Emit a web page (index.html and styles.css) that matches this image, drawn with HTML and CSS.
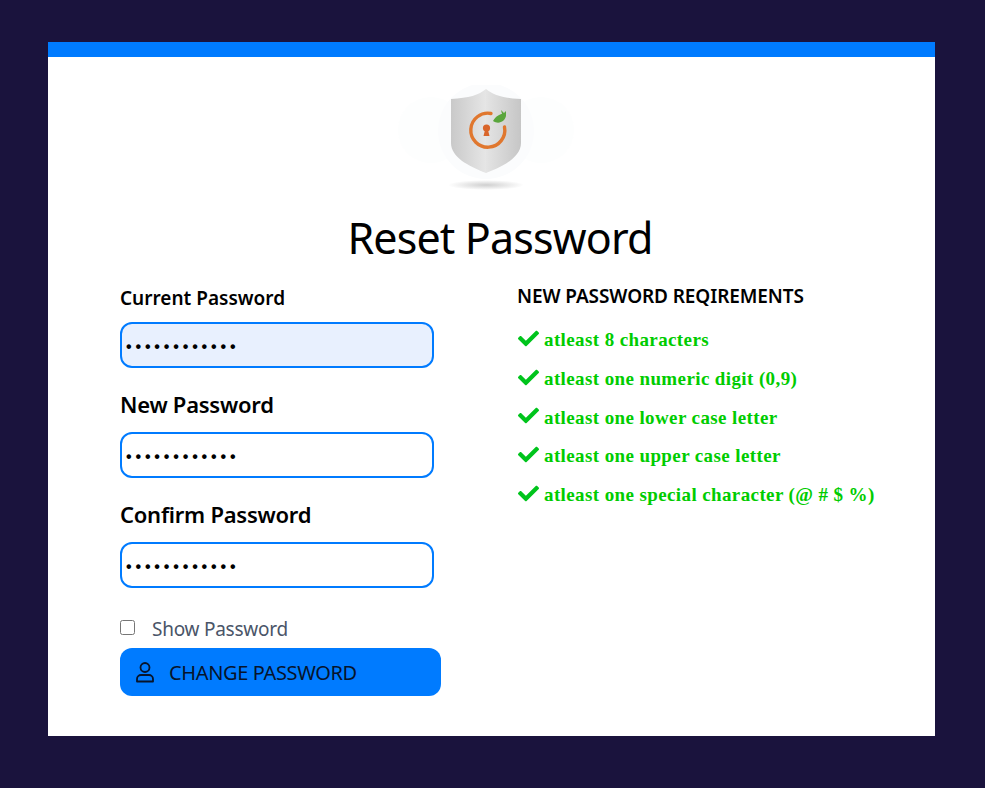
FILE: index.html
```html
<!DOCTYPE html>
<html lang="en">
<head>
<meta charset="utf-8">
<title>Reset Password</title>
<link rel="stylesheet" href="styles.css">
</head>
<body>
<main class="card">
  <div class="logo-wrap">
    <svg class="logo" width="180" height="110" viewBox="0 0 180 110">
      <defs>
        <linearGradient id="sl" x1="0" x2="1" y1="0" y2="0"><stop offset="0" stop-color="#c9c9c9"/><stop offset="1" stop-color="#e6e6e6"/></linearGradient>
        <linearGradient id="sr" x1="0" x2="1" y1="0" y2="0"><stop offset="0" stop-color="#e4e4e4"/><stop offset="1" stop-color="#c6c6c6"/></linearGradient>
        <radialGradient id="sh"><stop offset="0" stop-color="#cfcfcf"/><stop offset="1" stop-color="#ffffff"/></radialGradient>
        <filter id="bl"><feGaussianBlur stdDeviation="0.6"/></filter>
      </defs>
      <circle cx="35" cy="45" r="33" fill="#fdfefe"/>
      <circle cx="145" cy="45" r="33" fill="#fdfefe"/>
      <circle cx="90" cy="46" r="48" fill="#fbfcfd"/>
      <ellipse cx="90" cy="100" rx="38" ry="5" fill="url(#sh)"/>
      <g filter="url(#bl)">
        <path d="M90 4C83 10 73 13 55 14V58C55 72 72 81 90 88Z" fill="url(#sl)"/>
        <path d="M90 4C97 10 107 13 125 14V58C125 72 108 81 90 88Z" fill="url(#sr)"/>
        <path d="M95 28.500A17 17 0 1 0 108.500 42" fill="none" stroke="#e0772f" stroke-width="3.400" stroke-linecap="round"/>
        <circle cx="90.500" cy="43" r="3.600" fill="#d9652b"/>
        <path d="M89 45H92L93.500 51H87.500Z" fill="#d9652b"/>
        <path d="M97 36C100 31 104 29 106 29L105 25L108 28L110 26L110 31C109 36 103 40 97 36Z" fill="#5aa63c"/>
      </g>
    </svg>
  </div>
  <h1 class="title">Reset Password</h1>
  <div class="columns">
    <form class="form">
      <label class="label label-sm" for="cur">Current Password</label>
      <input class="field field-filled" id="cur" type="password" value="abcdefghijkl">
      <label class="label" for="new">New Password</label>
      <input class="field" id="new" type="password" value="abcdefghijkl">
      <label class="label" for="con">Confirm Password</label>
      <input class="field" id="con" type="password" value="abcdefghijkl">
      <div class="show">
        <input class="check" id="show" type="checkbox">
        <label class="show-label" for="show">Show Password</label>
      </div>
      <button class="submit" type="button">
        <svg class="user" width="20" height="22" viewBox="0 0 20 22" fill="none" stroke="#07142b" stroke-width="1.800">
          <circle cx="10" cy="6.500" r="4.500"/>
          <path d="M2 20.500V18C2 15.500 4 14 6 14H14C16 14 18 15.500 18 18V20.500Z" stroke-linejoin="round"/>
        </svg>
        CHANGE PASSWORD
      </button>
    </form>
    <section class="reqs">
      <h2 class="reqs-title">NEW PASSWORD REQIREMENTS</h2>
      <ul class="req-list">
        <li class="req"><svg class="tick" viewBox="0 0 512 512"><path d="M173.898 439.404l-166.4-166.4c-9.997-9.997-9.997-26.206 0-36.204l36.203-36.204c9.997-9.998 26.207-9.998 36.204 0L192 312.69 432.095 72.596c9.997-9.997 26.207-9.997 36.204 0l36.203 36.204c9.997 9.997 9.997 26.206 0 36.204l-294.4 294.401c-9.998 9.997-26.207 9.997-36.204-.001z"/></svg>atleast 8 characters</li>
        <li class="req"><svg class="tick" viewBox="0 0 512 512"><path d="M173.898 439.404l-166.4-166.4c-9.997-9.997-9.997-26.206 0-36.204l36.203-36.204c9.997-9.998 26.207-9.998 36.204 0L192 312.69 432.095 72.596c9.997-9.997 26.207-9.997 36.204 0l36.203 36.204c9.997 9.997 9.997 26.206 0 36.204l-294.4 294.401c-9.998 9.997-26.207 9.997-36.204-.001z"/></svg>atleast one numeric digit (0,9)</li>
        <li class="req"><svg class="tick" viewBox="0 0 512 512"><path d="M173.898 439.404l-166.4-166.4c-9.997-9.997-9.997-26.206 0-36.204l36.203-36.204c9.997-9.998 26.207-9.998 36.204 0L192 312.69 432.095 72.596c9.997-9.997 26.207-9.997 36.204 0l36.203 36.204c9.997 9.997 9.997 26.206 0 36.204l-294.4 294.401c-9.998 9.997-26.207 9.997-36.204-.001z"/></svg>atleast one lower case letter</li>
        <li class="req"><svg class="tick" viewBox="0 0 512 512"><path d="M173.898 439.404l-166.4-166.4c-9.997-9.997-9.997-26.206 0-36.204l36.203-36.204c9.997-9.998 26.207-9.998 36.204 0L192 312.69 432.095 72.596c9.997-9.997 26.207-9.997 36.204 0l36.203 36.204c9.997 9.997 9.997 26.206 0 36.204l-294.4 294.401c-9.998 9.997-26.207 9.997-36.204-.001z"/></svg>atleast one upper case letter</li>
        <li class="req"><svg class="tick" viewBox="0 0 512 512"><path d="M173.898 439.404l-166.4-166.4c-9.997-9.997-9.997-26.206 0-36.204l36.203-36.204c9.997-9.998 26.207-9.998 36.204 0L192 312.69 432.095 72.596c9.997-9.997 26.207-9.997 36.204 0l36.203 36.204c9.997 9.997 9.997 26.206 0 36.204l-294.4 294.401c-9.998 9.997-26.207 9.997-36.204-.001z"/></svg>atleast one special character (@ # $ %)</li>
      </ul>
    </section>
  </div>
</main>
</body>
</html>
```
FILE: styles.css
```css
* { box-sizing: border-box; }
html, body { margin: 0; height: 100%; overflow: hidden; }
body {
  background: #1a133d;
  padding: 42px 50px 52px 48px;
  font-family: "Noto Sans", "Open Sans", sans-serif;
  color: #000;
}
.card {
  background: #fff;
  border-top: 15px solid #007bff;
  height: 694px;
  padding: 28px 60px 0 72px;
}
.logo-wrap { display: flex; justify-content: center; padding-left: 8px; height: 110px; margin-left: -31px; }
.logo { display: block; }
.title {
  margin: 17px 0 0;
  text-align: center;
  font-size: 43px;
  line-height: 52px;
  font-weight: 400;
  letter-spacing: -0.85px;
  padding-left: 5px;
}
.columns { display: flex; margin-top: 21px; }
.form { width: 397px; flex: none; display: flex; flex-direction: column; align-items: flex-start; }
.label { font-weight: 600; font-size: 22px; line-height: 30px; margin-top: 21px; margin-bottom: 13px; letter-spacing: -0.25px; }
.label-sm { font-size: 19px; margin-top: 0; line-height: 26px; margin-bottom: 11px; letter-spacing: 0; }
.field {
  width: 314px;
  height: 46px;
  border: 2px solid #007bff;
  border-radius: 12px;
  background: #fff;
  padding: 3px 4px 0;
  font-family: "Liberation Sans", sans-serif;
  font-size: 16px;
  letter-spacing: 3.85px;
  font-weight: 700;
  color: #000;
  outline: none;
}
.field-filled { background: #e8f0fe; }
.show { display: flex; align-items: center; height: 30px; margin-top: 26px; }
.check { width: 15px; height: 15px; margin: 0 17px 3px 0; }
.show-label { font-size: 19px; color: #4a5568; letter-spacing: -0.25px; }
.submit {
  width: 321px;
  height: 48px;
  margin-top: 4px;
  background: #007bff;
  border: 0;
  border-radius: 12px;
  display: flex;
  align-items: center;
  gap: 14px;
  padding: 0 15px;
  font-family: inherit;
  font-size: 20px;
  letter-spacing: -0.36px;
  color: #07142b;
}
.user { flex: none; }
.reqs-title { margin: -2px 0 0 0; font-size: 19px; line-height: 26px; font-weight: 600; letter-spacing: -0.1px; }
.req-list { list-style: none; margin: 12px 0 0; padding: 0; }
.req {
  display: flex;
  align-items: center;
  height: 38.7px;
  font-family: "Liberation Serif", serif;
  font-weight: 700;
  font-size: 19px;
  letter-spacing: 0.39px;
  color: #0c0;
}
.tick { width: 21px; height: 21px; margin-left: 1px; margin-right: 5px; fill: #00c41c; flex: none; position: relative; top: -2px; }
```
